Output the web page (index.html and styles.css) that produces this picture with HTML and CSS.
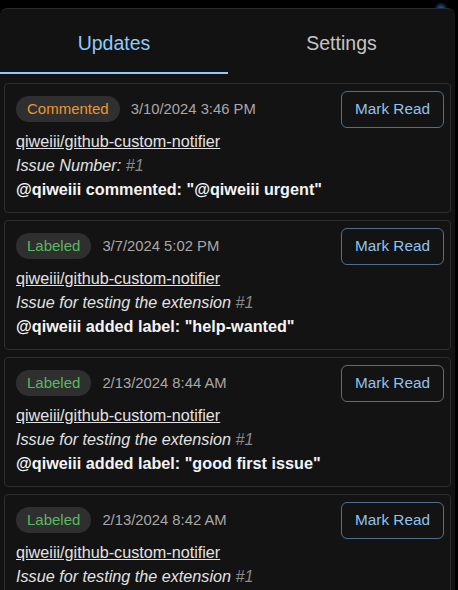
FILE: index.html
```html
<!DOCTYPE html>
<html>
<head>
<meta charset="utf-8">
<link rel="stylesheet" href="styles.css">
</head>
<body>
<div class="panel">
  <div class="tabs">
    <div class="tab active">Updates</div>
    <div class="tab">Settings</div>
  </div>
  <div class="list">
    <div class="card">
      <div class="head">
        <span class="chip orange">Commented</span>
        <span class="date">3/10/2024 3:46 PM</span>
        <button class="mark">Mark Read</button>
      </div>
      <div class="line"><a class="repo" href="#">qiweiii/github-custom-notifier</a></div>
      <div class="line ital">Issue Number: <span class="num">#1</span></div>
      <div class="line bold">@qiweiii commented: "@qiweiii urgent"</div>
    </div>
    <div class="card">
      <div class="head">
        <span class="chip green">Labeled</span>
        <span class="date">3/7/2024 5:02 PM</span>
        <button class="mark">Mark Read</button>
      </div>
      <div class="line"><a class="repo" href="#">qiweiii/github-custom-notifier</a></div>
      <div class="line ital">Issue for testing the extension <span class="num">#1</span></div>
      <div class="line bold">@qiweiii added label: "help-wanted"</div>
    </div>
    <div class="card">
      <div class="head">
        <span class="chip green">Labeled</span>
        <span class="date">2/13/2024 8:44 AM</span>
        <button class="mark">Mark Read</button>
      </div>
      <div class="line"><a class="repo" href="#">qiweiii/github-custom-notifier</a></div>
      <div class="line ital">Issue for testing the extension <span class="num">#1</span></div>
      <div class="line bold">@qiweiii added label: "good first issue"</div>
    </div>
    <div class="card">
      <div class="head">
        <span class="chip green">Labeled</span>
        <span class="date">2/13/2024 8:42 AM</span>
        <button class="mark">Mark Read</button>
      </div>
      <div class="line"><a class="repo" href="#">qiweiii/github-custom-notifier</a></div>
      <div class="line ital">Issue for testing the extension <span class="num">#1</span></div>
      <div class="line bold">@qiweiii added label: "good first issue"</div>
    </div>
  </div>
</div>
</body>
</html>
```
FILE: styles.css
```css
html, body {
  margin: 0;
  padding: 0;
  height: 590px;
  overflow: hidden;
  font-family: "Liberation Sans", Arial, sans-serif;
}
body {
  background: radial-gradient(circle at 441px 9px, #2f62c0 0, rgba(47, 98, 192, 0) 7px), #000;
}
.panel {
  margin-top: 8px;
  width: 455px;
  height: 600px;
  background: #121212;
  border-top: 1px solid #2c2c2c;
  border-radius: 8px 8px 0 0;
  box-sizing: border-box;
}
.tabs {
  display: grid;
  grid-template-columns: 228px 1fr;
  height: 65px;
}
.tab {
  display: flex;
  align-items: center;
  justify-content: center;
  font-size: 19.5px;
  color: #c4c4c4;
  box-sizing: border-box;
  padding-top: 3px;
}
.tab.active {
  color: #90caf9;
  border-bottom: 2px solid #90caf9;
  padding-top: 5px;
}
.list {
  padding: 9px 4px 0 4px;
  display: flex;
  flex-direction: column;
  gap: 7px;
}
.card {
  border: 1px solid #2e2e2e;
  border-radius: 4px;
  background: #131313;
  padding: 12px 6px 11px 11px;
}
.head {
  display: flex;
  align-items: center;
  height: 26px;
}
.chip {
  height: 26px;
  line-height: 26px;
  padding: 0 11px;
  border-radius: 13px;
  background: #2f2f2f;
  font-size: 15px;
}
.chip.orange { color: #eb9634; }
.chip.green { color: #5cb860; }
.date {
  margin-left: 11px;
  font-size: 14.8px;
  color: #a8a8a8;
}
.mark {
  margin-left: auto;
  height: 37px;
  width: 103px;
  padding: 0;
  background: transparent;
  border: 1px solid #4f6f8a;
  border-radius: 6px;
  color: #90c2ec;
  font-family: "Liberation Sans", Arial, sans-serif;
  font-size: 15.3px;
}
.line {
  font-size: 16.2px;
  line-height: 24px;
  color: #e2e2e2;
  white-space: nowrap;
}
.head + .line { margin-top: 7px; }
.repo {
  color: #e2e2e2;
  text-decoration: underline;
}
.ital { font-style: italic; }
.num { color: #8a8a8a; }
.bold {
  font-weight: bold;
  color: #f4f4f4;
}
```
